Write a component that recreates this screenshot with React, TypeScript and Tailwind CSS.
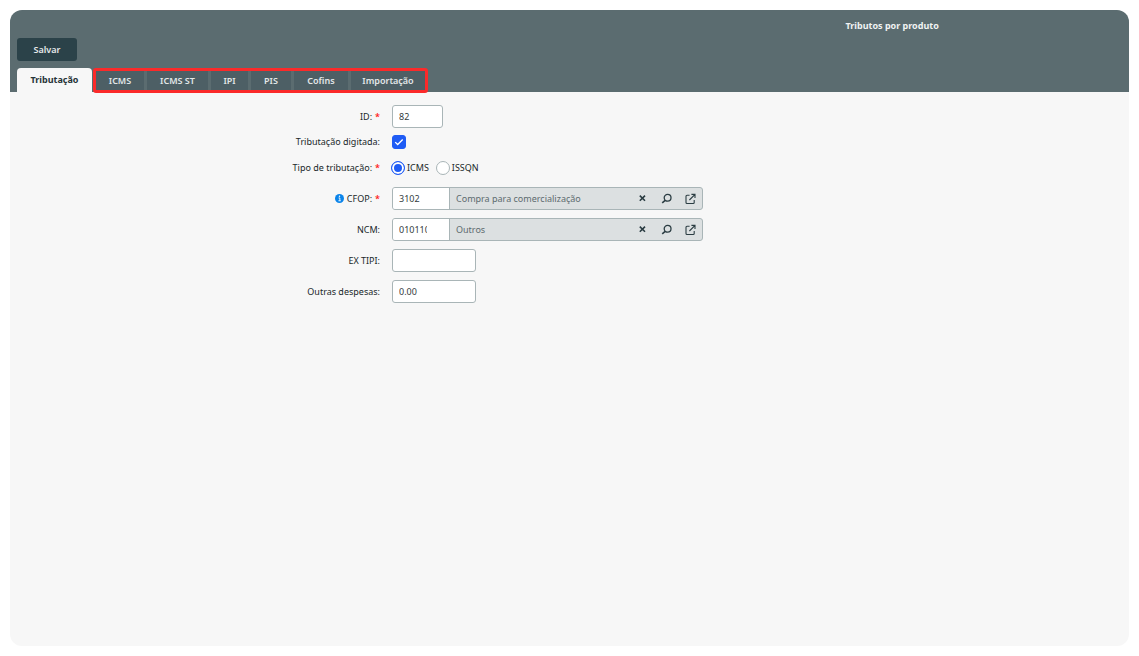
import { useState, type ReactNode } from "react";

const OTHER_TABS = [
  { label: "ICMS", width: "w-12" },
  { label: "ICMS ST", width: "w-[61px]" },
  { label: "IPI", width: "w-[37px]" },
  { label: "PIS", width: "w-10" },
  { label: "Cofins", width: "w-[54px]" },
  { label: "Importação", width: "w-[74px]" },
];

const FIELD =
  "h-[23px] rounded-[3px] border border-[#a9b5b7] bg-white px-1.5 text-[#333b3d] outline-none focus:border-[#1f5cf5]";

function Row({
  label,
  htmlFor,
  required,
  info,
  height = "h-[23px]",
  children,
}: {
  label: string;
  htmlFor: string;
  required?: boolean;
  info?: boolean;
  height?: string;
  children: ReactNode;
}) {
  return (
    <div className={`flex items-center gap-3 ${height}`}>
      <label htmlFor={htmlFor} className="flex w-[370px] shrink-0 items-center justify-end gap-[3px]">
        {info && (
          <svg viewBox="0 0 10 10" className="size-[9px]" aria-hidden="true">
            <circle cx="5" cy="5" r="5" fill="#0a84ea" />
            <path d="M4 4.4h1.4v3M3.8 7.5h2.6" stroke="#fff" strokeWidth="1" fill="none" />
            <circle cx="5" cy="2.6" r=".8" fill="#fff" />
          </svg>
        )}
        <span>{label}</span>
        {required && <span className="font-semibold text-[#ff2222]">*</span>}
      </label>
      {children}
    </div>
  );
}

function Lookup({ id, code, text }: { id: string; code: string; text: string }) {
  return (
    <div className="flex h-[23px] w-[311px] overflow-hidden rounded-[3px] border border-[#a9b5b7] bg-[#dce0e1] text-[#2b3d43]">
      <input
        id={id}
        defaultValue={code}
        className="w-[57px] shrink-0 border-r border-[#a9b5b7] bg-white pr-[22px] pl-1.5 text-[#333b3d] outline-none"
      />
      <span className="flex grow items-center pl-1.5 text-[#5d6b6f]">{text}</span>
      <div className="flex items-center">
        <button type="button" aria-label="Limpar" className="flex w-6 justify-center">
          <svg viewBox="0 0 12 12" className="size-3" fill="none" stroke="currentColor" strokeWidth="1.6">
            <path d="M3.8 2.6l5.2 5.2M9 2.6L3.8 7.8" />
          </svg>
        </button>
        <button type="button" aria-label="Pesquisar" className="flex w-6 justify-center">
          <svg viewBox="0 0 12 12" className="size-3" fill="none" stroke="currentColor" strokeWidth="1.3">
            <circle cx="7.6" cy="4.8" r="3.4" />
            <path d="M5.2 7.3L2.2 9.8" strokeWidth="1.6" />
          </svg>
        </button>
        <button type="button" aria-label="Abrir cadastro" className="flex w-6 justify-center">
          <svg viewBox="0 0 12 12" className="size-3" fill="none" stroke="currentColor" strokeWidth="1.1">
            <path d="M5.6 2.3H3a1 1 0 0 0-1 1v6.2a1 1 0 0 0 1 1h6.2a1 1 0 0 0 1-1V7" />
            <path d="M7.4 1.4H11V5M10.8 1.6L5.4 7" />
          </svg>
        </button>
      </div>
    </div>
  );
}

export default function App() {
  const [active, setActive] = useState("Tributação");
  const [typed, setTyped] = useState(true);
  const [kind, setKind] = useState("ICMS");

  return (
    <div className="flex min-h-screen flex-col bg-white p-2.5 font-['Noto_Sans',sans-serif] text-[9px] leading-[14px] text-[#20282a]">
      <main className="flex grow flex-col overflow-hidden rounded-xl bg-[#f7f7f7]">
        <header className="flex flex-col bg-[#5b6c70] px-[7px] pt-[9px]">
          <h1 className="ml-[58.4%] text-center font-bold text-[#f0f3f3]">Tributos por produto</h1>
          <button
            type="button"
            className="mt-[5px] flex h-[23px] w-[60px] items-center justify-center rounded-[3px] bg-[#2b4249] font-semibold text-[#e6eaeb]"
          >
            Salvar
          </button>
          <div role="tablist" className="mt-[7px] flex h-6 items-stretch gap-px">
            <button
              type="button"
              role="tab"
              aria-selected={active === "Tributação"}
              onClick={() => setActive("Tributação")}
              className="w-[75px] rounded-t-[4px] bg-[#f7f7f7] font-bold text-[#263338]"
            >
              Tributação
            </button>
            <div className="-mb-px flex gap-[3px] rounded-[3px] border-3 border-[#fb2a2a]">
              {OTHER_TABS.map((tab) => (
                <button
                  key={tab.label}
                  type="button"
                  role="tab"
                  aria-selected={active === tab.label}
                  onClick={() => setActive(tab.label)}
                  className={`bg-[#4d5f65] font-semibold text-[#e3e7e8] ${tab.width}`}
                >
                  {tab.label}
                </button>
              ))}
            </div>
          </div>
        </header>

        <form className="flex flex-col pt-[13px]">
          <Row label="ID:" htmlFor="id" required>
            <input id="id" defaultValue="82" className={`w-[51px] ${FIELD}`} />
          </Row>
          <Row label="Tributação digitada:" htmlFor="digitada" height="mt-px h-[26px]">
            <span className="grid size-3.5 place-items-center">
              <input
                id="digitada"
                type="checkbox"
                checked={typed}
                onChange={(e) => setTyped(e.target.checked)}
                className="peer col-start-1 row-start-1 size-3.5 appearance-none rounded-[3px] border border-[#a9b5b7] bg-white checked:border-[#1f5cf5] checked:bg-[#1f5cf5]"
              />
              <svg
                viewBox="0 0 10 10"
                className="pointer-events-none col-start-1 row-start-1 hidden size-2.5 peer-checked:block"
                fill="none"
                stroke="#fff"
                strokeWidth="1.3"
              >
                <path d="M1.2 5.1l2.5 2.4 5-5" />
              </svg>
            </span>
          </Row>
          <Row label="Tipo de tributação:" htmlFor="tipo-ICMS" required height="h-[26px]">
            <div className="-ml-px flex gap-[7px]">
              {["ICMS", "ISSQN"].map((option) => (
                <label key={option} className="flex items-center gap-0.5">
                  <input
                    id={`tipo-${option}`}
                    type="radio"
                    name="tipo"
                    checked={kind === option}
                    onChange={() => setKind(option)}
                    className="size-3.5 appearance-none rounded-full border border-[#a9b5b7] bg-white checked:border-[#1f5cf5] checked:bg-[#1f5cf5] checked:shadow-[inset_0_0_0_2px_#fff]"
                  />
                  {option}
                </label>
              ))}
            </div>
          </Row>
          <div className="mt-1.5 flex flex-col gap-2">
            <Row label="CFOP:" htmlFor="cfop" required info>
              <Lookup id="cfop" code="3102" text="Compra para comercialização" />
            </Row>
            <Row label="NCM:" htmlFor="ncm">
              <Lookup id="ncm" code="01011010" text="Outros" />
            </Row>
            <Row label="EX TIPI:" htmlFor="ex-tipi">
              <input id="ex-tipi" className={`w-[84px] ${FIELD}`} />
            </Row>
            <Row label="Outras despesas:" htmlFor="despesas">
              <input id="despesas" defaultValue="0.00" className={`w-[84px] ${FIELD}`} />
            </Row>
          </div>
        </form>
      </main>
    </div>
  );
}
